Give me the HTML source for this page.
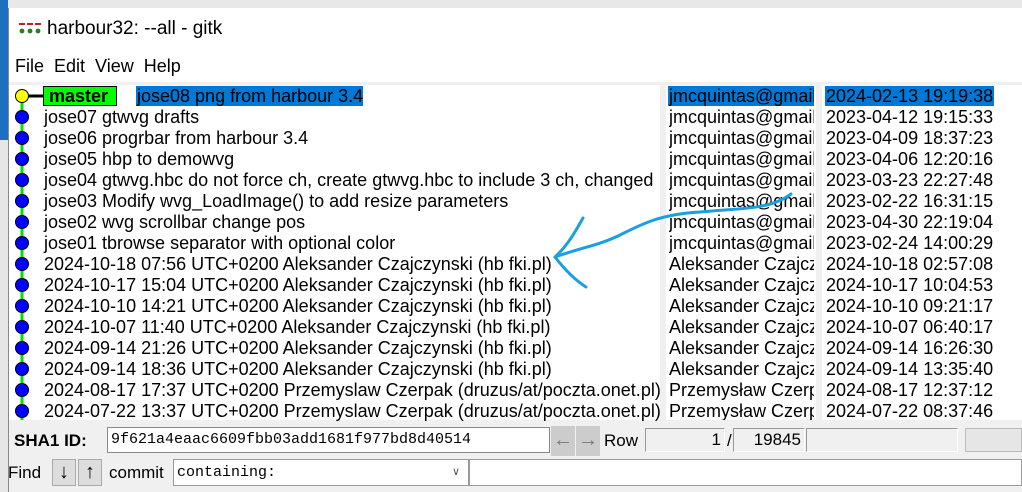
<!DOCTYPE html>
<html><head><style>
*{margin:0;padding:0;box-sizing:border-box}
body{width:1022px;height:492px;overflow:hidden;background:#f0f0f0;font-family:"Liberation Sans",Arial,sans-serif;position:relative}
.abs{position:absolute}
.t{font-size:18px;color:#000;white-space:nowrap;position:absolute;line-height:21px}
</style></head><body>
<div class="abs" style="left:0;top:0;width:1022px;height:8px;background:#e8e8e8"></div>
<div class="abs" style="left:0;top:0;width:8px;height:140px;background:#1e6fc0"></div>
<div class="abs" style="left:0;top:140px;width:8px;height:352px;background:#e6e6e6"></div>
<div class="abs" style="left:8px;top:8px;width:1014px;height:484px;background:#f0f0f0;border-left:1px solid #888"></div>
<div class="abs" style="left:9px;top:8px;width:1013px;height:42px;background:#fff"></div>
<svg class="abs" style="left:18px;top:22px" width="24" height="14"><rect x="1" y="1" width="6" height="2" fill="#b22"/><rect x="9" y="1" width="6" height="2" fill="#b22"/><rect x="17" y="1" width="6" height="2" fill="#b22"/><circle cx="4" cy="9" r="2.4" fill="#2a7a2a"/><circle cx="12" cy="9" r="2.4" fill="#2a7a2a"/><circle cx="20" cy="9" r="2.4" fill="#2a7a2a"/></svg>
<div class="t" style="left:47px;top:18px;font-size:19px">harbour32: --all - gitk</div>
<div class="abs" style="left:9px;top:50px;width:1013px;height:32px;background:#fff"></div>
<div class="t" style="left:15px;top:56px;font-size:18px">File&nbsp;&nbsp;Edit&nbsp;&nbsp;View&nbsp;&nbsp;Help</div>
<div class="abs" style="left:9px;top:82px;width:1013px;height:3px;background:#f0f0f0"></div>
<div class="abs" style="left:9px;top:85px;width:651px;height:335px;background:#fff"></div>
<div class="abs" style="left:666px;top:85px;width:150px;height:335px;background:#fff"></div>
<div class="abs" style="left:822px;top:85px;width:200px;height:335px;background:#fff"></div>
<svg class="abs" style="left:0;top:0" width="60" height="420">
<line x1="22" y1="96" x2="22" y2="420" stroke="#00e000" stroke-width="3"/>
<line x1="22" y1="96" x2="44" y2="96" stroke="#000" stroke-width="3"/>
<circle cx="22" cy="96" r="6.5" fill="#ff0" stroke="#000"/>
<g fill="#00f" stroke="#000">
<circle cx="22" cy="117" r="6.5"/><circle cx="22" cy="138" r="6.5"/><circle cx="22" cy="159" r="6.5"/><circle cx="22" cy="180" r="6.5"/><circle cx="22" cy="201" r="6.5"/><circle cx="22" cy="222" r="6.5"/><circle cx="22" cy="243" r="6.5"/><circle cx="22" cy="264" r="6.5"/><circle cx="22" cy="285" r="6.5"/><circle cx="22" cy="306" r="6.5"/><circle cx="22" cy="327" r="6.5"/><circle cx="22" cy="348" r="6.5"/><circle cx="22" cy="369" r="6.5"/><circle cx="22" cy="390" r="6.5"/><circle cx="22" cy="411" r="6.5"/></g></svg>
<div class="abs" style="left:43px;top:86px;width:74px;height:20px;background:#0f0;border:1px solid #000;font-weight:bold;font-size:18px;padding-left:5px;line-height:18px">master</div>
<div class="abs" style="left:136px;top:86px;width:227px;height:20px;background:#0078d7"></div>
<div class="abs" style="left:668px;top:86px;width:146px;height:20px;background:#0078d7"></div>
<div class="abs" style="left:825px;top:86px;width:169px;height:20px;background:#0078d7"></div>
<div class="t" style="left:137px;top:86px">jose08 png from harbour 3.4</div>
<div class="t" style="left:44px;top:107px">jose07 gtwvg drafts<br>jose06 progrbar from harbour 3.4<br>jose05 hbp to demowvg<br>jose04 gtwvg.hbc do not force ch, create gtwvg.hbc to include 3 ch, changed<br>jose03 Modify wvg_LoadImage() to add resize parameters<br>jose02 wvg scrollbar change pos<br>jose01 tbrowse separator with optional color<br>2024-10-18 07:56 UTC+0200 Aleksander Czajczynski (hb fki.pl)<br>2024-10-17 15:04 UTC+0200 Aleksander Czajczynski (hb fki.pl)<br>2024-10-10 14:21 UTC+0200 Aleksander Czajczynski (hb fki.pl)<br>2024-10-07 11:40 UTC+0200 Aleksander Czajczynski (hb fki.pl)<br>2024-09-14 21:26 UTC+0200 Aleksander Czajczynski (hb fki.pl)<br>2024-09-14 18:36 UTC+0200 Aleksander Czajczynski (hb fki.pl)<br>2024-08-17 17:37 UTC+0200 Przemyslaw Czerpak (druzus/at/poczta.onet.pl)<br>2024-07-22 13:37 UTC+0200 Przemyslaw Czerpak (druzus/at/poczta.onet.pl)</div>
<div class="abs" style="left:669px;top:86px;width:145px;height:334px;overflow:hidden"><div class="t" style="left:0;top:0">jmcquintas@gmail<br>jmcquintas@gmail<br>jmcquintas@gmail<br>jmcquintas@gmail<br>jmcquintas@gmail<br>jmcquintas@gmail<br>jmcquintas@gmail<br>jmcquintas@gmail<br>Aleksander Czajczynski<br>Aleksander Czajczynski<br>Aleksander Czajczynski<br>Aleksander Czajczynski<br>Aleksander Czajczynski<br>Aleksander Czajczynski<br>Przemysław Czerpak<br>Przemysław Czerpak</div></div>
<div class="t" style="left:826px;top:86px">2024-02-13 19:19:38<br>2023-04-12 19:15:33<br>2023-04-09 18:37:23<br>2023-04-06 12:20:16<br>2023-03-23 22:27:48<br>2023-02-22 16:31:15<br>2023-04-30 22:19:04<br>2023-02-24 14:00:29<br>2024-10-18 02:57:08<br>2024-10-17 10:04:53<br>2024-10-10 09:21:17<br>2024-10-07 06:40:17<br>2024-09-14 16:26:30<br>2024-09-14 13:35:40<br>2024-08-17 12:37:12<br>2024-07-22 08:37:46</div>
<svg class="abs" style="left:0;top:0" width="1022" height="492"><g fill="none" stroke="#18a0e0" stroke-width="3" stroke-linecap="round" stroke-linejoin="round"><path d="M791 194 C770 210 740 208 700 212 C660 214 640 225 620 235 C600 245 580 248 555 257"/><path d="M583 218 C575 232 568 245 555 257 C565 270 575 280 586 287"/></g></svg>
<div class="t" style="left:14px;top:430px;font-weight:bold;font-size:17px">SHA1 ID:</div>
<div class="abs" style="left:107px;top:427px;width:443px;height:26px;background:#fff;border:1px solid #888;font-family:'Liberation Mono',monospace;font-size:15px;line-height:24px;padding-left:3px;overflow:hidden">9f621a4eaac6609fbb03add1681f977bd8d40514</div>
<div class="abs" style="left:551px;top:426px;width:24px;height:30px;background:#ccc;color:#777;font-size:20px;font-weight:bold;text-align:center;line-height:28px">&#8592;</div>
<div class="abs" style="left:576px;top:426px;width:24px;height:30px;background:#ccc;color:#777;font-size:20px;font-weight:bold;text-align:center;line-height:28px">&#8594;</div>
<div class="t" style="left:604px;top:430px;font-size:17px">Row</div>
<div class="abs" style="left:645px;top:428px;width:80px;height:24px;border:1px solid #999;border-right-color:#fff;border-bottom-color:#fff;text-align:right;font-size:17px;line-height:22px;padding-right:3px">1</div>
<div class="t" style="left:727px;top:430px;font-size:17px">/</div>
<div class="abs" style="left:733px;top:428px;width:72px;height:24px;border:1px solid #999;border-right-color:#fff;border-bottom-color:#fff;text-align:right;font-size:17px;line-height:22px;padding-right:3px">19845</div>
<div class="abs" style="left:806px;top:428px;width:152px;height:24px;border:1px solid #999;border-right-color:#fff;border-bottom-color:#fff"></div>
<div class="abs" style="left:965px;top:428px;width:57px;height:24px;border:1px solid #bbb;background:#e6e6e6"></div>
<div class="t" style="left:8px;top:462px;font-size:17px">Find</div>
<div class="abs" style="left:52px;top:459px;width:24px;height:27px;background:#ddd;border:1px solid #aaa;text-align:center;font-size:20px;font-weight:bold;line-height:25px">&#8595;</div>
<div class="abs" style="left:78px;top:459px;width:24px;height:27px;background:#ddd;border:1px solid #aaa;text-align:center;font-size:20px;font-weight:bold;line-height:25px">&#8593;</div>
<div class="t" style="left:109px;top:462px;font-size:17px">commit</div>
<div class="abs" style="left:173px;top:459px;width:296px;height:27px;background:#fff;border:1px solid #999;font-family:'Liberation Mono',monospace;font-size:15px;line-height:25px;padding-left:3px">containing:<span style="position:absolute;right:8px;top:0;font-family:'Liberation Sans';font-size:11px;color:#555">&#8744;</span></div>
<div class="abs" style="left:469px;top:459px;width:553px;height:27px;background:#fff;border:1px solid #999"></div>
</body></html>
